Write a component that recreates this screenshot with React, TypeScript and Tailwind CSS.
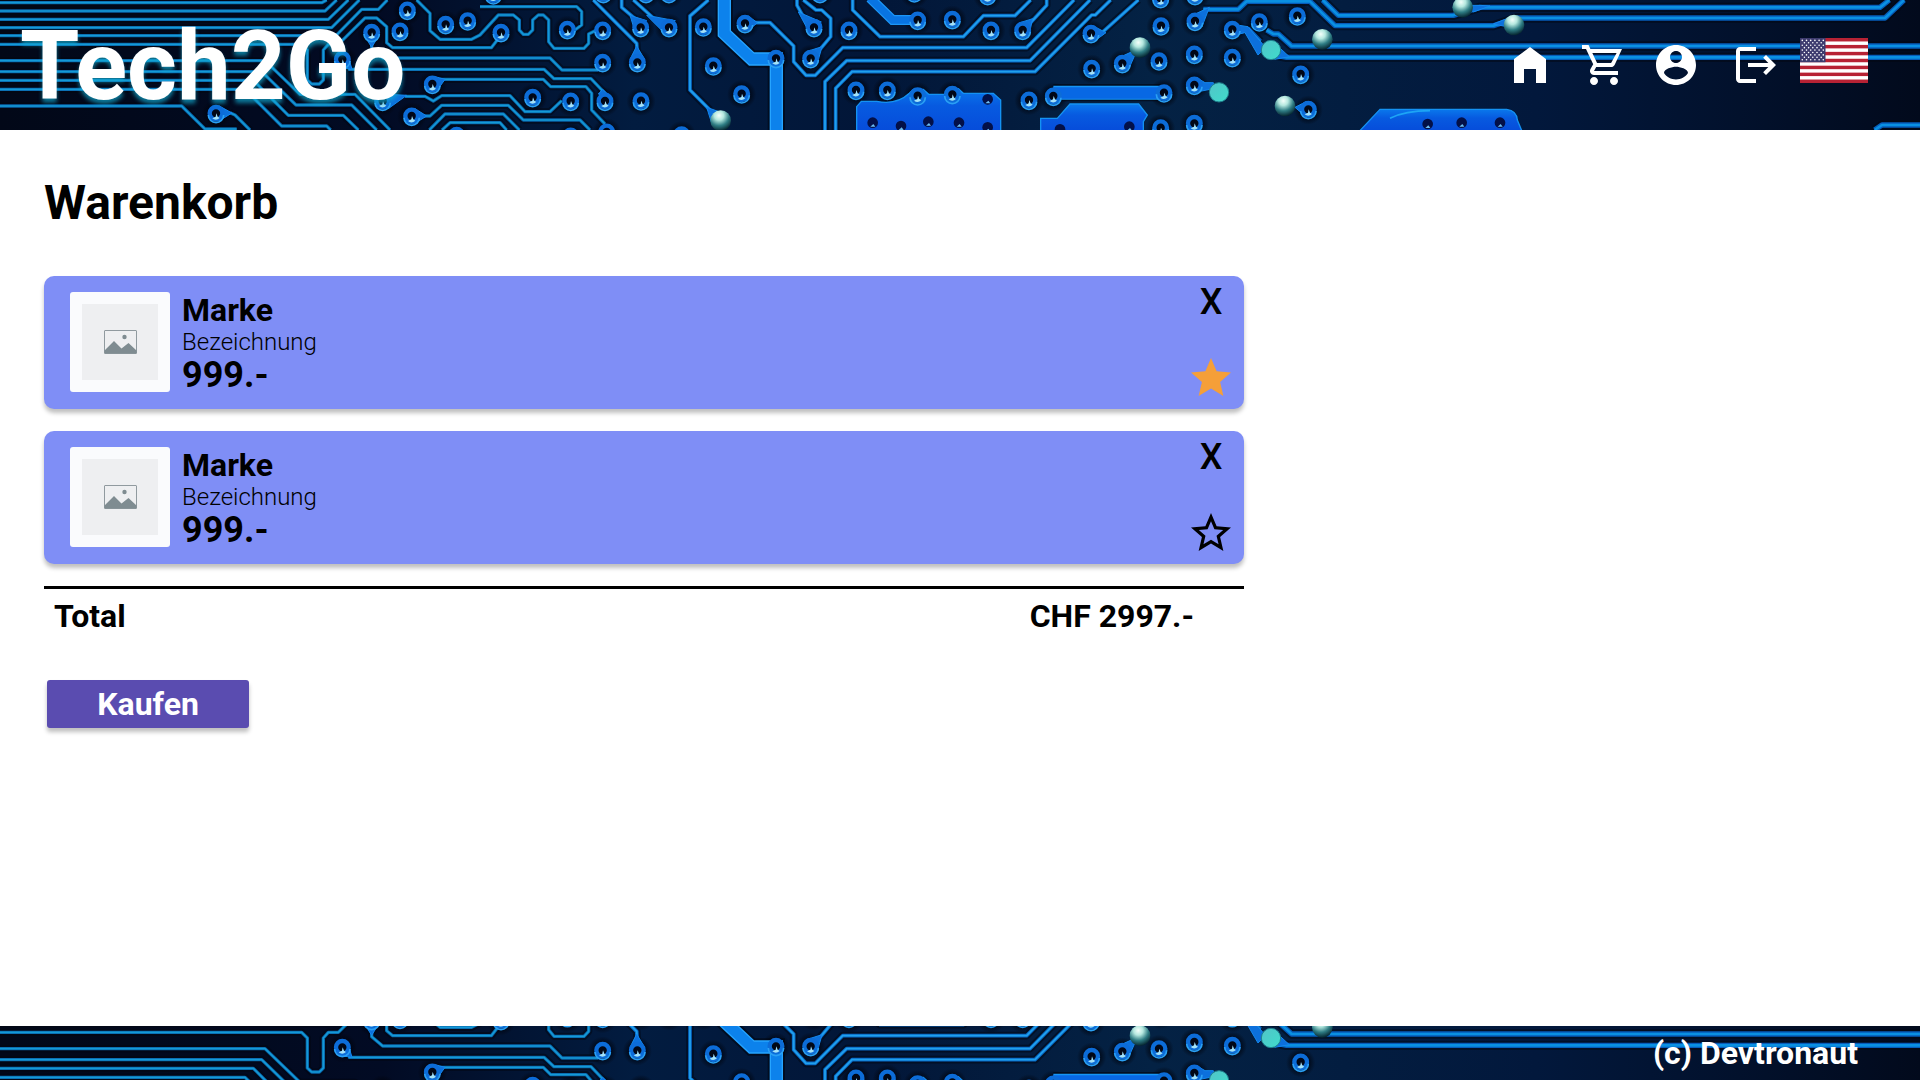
import { useState } from 'react';
import type { ReactNode } from 'react';

type Point = [number, number];

/* Traces of the circuit board, in board units (three per pixel). */
const LEFT_TRACES = [
  'M0 8H965L980 0',
  'M0 33H975L1010 0',
  'M0 58H985L1045 0',
  'M0 83H995L1078 0',
  'M0 107H1008L1085 28H1135L1162 0',
  'M0 133H905L922 150V240L935 252H958L970 240V150L985 133H1015L1095 54H1130L1160 80V128L1178 143H1474L1490 122L1503 97',
  'M1115 110V146L1148 174H1650L1686 210H1795',
  'M0 182H795L900 283H1065L1170 390',
  'M0 215H785L888 315H1055L1130 390',
  'M0 241H760L865 346H1030L1075 390',
  'M0 268H735L845 378H980L992 390',
  'M0 318H545L615 387H710',
  'M690 338L705 345L750 390',
  'M1045 208H1632L1662 236H1773L1815 280',
  'M1250 0L1290 40V92L1320 118H1415L1440 105L1495 45H1540L1558 60V90L1570 103H1585L1598 90V60L1615 45H1630L1646 60V125L1662 145H1752L1766 130V102L1790 90',
  'M1320 238H1630L1652 260H1758L1775 280V330L1815 372',
  'M1215 289H1275L1300 303L1325 287H1530L1575 335H1650L1685 302',
  'M1270 348H1290L1325 316H1525L1570 360H1740L1770 390',
  'M1288 390L1335 342H1510L1558 390',
  'M1326 390L1350 368H1500L1520 390',
  'M1440 20H1730L1745 35V75L1722 92',
];

const RIGHT_TRACES = [
  'M1780 0L1910 130L1912 160',
  'M1865 0V22L1905 56',
  'M1900 0L1960 54',
  'M2125 0L2070 48V270L2130 330',
  'M2262 68H2310L2381 138V185L2418 226H2446L2528 143H3080L3222 0',
  'M2460 148L2492 110V55L2465 30H2448L2410 0',
  'M2410 50L2391 16V0',
  'M2558 0V30L2640 110H2890L2950 47H3045L3092 0',
  'M2475 390V245L2540 182H3090L3270 0',
  'M2507 390V265L2556 215H3105L3275 45H3286L3332 0',
  'M3090 70L3140 16V0',
  'M3306 98L3415 0',
];

const FAR_TRACES = [
  'M3610 28H3715L3740 4H3930L4005 77H4480L4550 54H5655L5712 0',
  'M3968 0L4015 46H4360L4440 22H5640L5668 0',
  'M3730 88H3745L3780 125',
  'M3800 90L3820 102H3835L3875 138H5760',
  'M3830 166L3860 172H5760',
  'M5624 390L5646 375H5760',
];

const VIAS: Point[] = [
  [1222, 30], [1200, 93], [1337, 73], [1403, 62], [1115, 97], [1027, 178], [1297, 252], [1235, 348],
  [1148, 303], [648, 340], [1370, 406], [1503, 97], [1702, 88], [1808, 90], [1808, 187], [1598, 292],
  [1712, 303], [1815, 303], [1923, 302], [1712, 408], [1820, 396], [2045, 404], [1922, 82], [2007, 82],
  [1912, 187], [2110, 80], [2140, 197], [2225, 281], [2235, 70], [2328, 175], [2442, 82], [2432, 175],
  [2547, 90], [2753, 60], [2857, 58], [2568, 270], [2662, 270], [1480, -16], [1810, -20], [1938, -20],
  [2007, -20], [2460, -20], [2743, -22], [2963, -14], [2973, 90], [3068, 90], [3273, 100], [3367, 190],
  [3477, 182], [3483, 77], [3482, -5], [3275, 205], [3087, 300], [3160, 288], [3492, 278], [3482, 383],
  [3583, 370], [3583, 162], [3697, 172], [3583, 255], [3585, 63], [3585, -14], [3697, 88], [3778, 65],
  [3892, 47], [3902, 222], [3925, 328], [2753, 287], [2857, 283],
];

const HOLES: Point[] = [
  [2618, 368], [2703, 378], [2785, 365], [2877, 368], [2963, 298], [2963, 382], [3180, 388],
  [3388, 380], [4283, 372], [4385, 368], [4500, 368],
];

const TAILS = [
  'M1094 108L1115 142L1136 108Z',
  'M1042 160L1056 208L1016 202Z',
  'M1305 230L1335 238L1315 266Z',
  'M1150 282L1220 286L1165 326Z',
  'M1245 326L1280 348L1245 370Z',
  'M658 318L696 339L658 362Z',
  'M1795 282L1808 268L1838 296Z',
  'M1890 178L1910 138L1934 178Z',
  'M1890 46L1940 62L1905 94Z',
  'M1940 46L2026 62L1990 96Z',
  'M2245 48L2272 68L2245 92Z',
  'M2395 36L2464 66L2425 92Z',
  'M2425 153L2466 140L2452 190Z',
  'M3060 68L3098 56L3087 105Z',
  'M3280 78L3318 98L3285 122Z',
  'M3372 166L3412 148L3387 205Z',
  'M3590 233L3615 248H3640V266L3590 276Z',
  'M3590 40L3628 22L3606 80Z',
  'M3705 74L3744 80L3796 142L3774 165L3735 98L3710 104Z',
  'M3824 130L3868 170L3824 178Z',
  'M3885 322L3920 304V352Z',
  'M2120 322L2160 336L2134 366Z',
  'M4400 16H4440L4470 18L4420 36Z',
  'M4480 72L4540 48L4540 84Z',
];

const GOLD_PADS: Point[] = [[2162, 362], [3420, 143], [3967, 118], [3855, 318], [4388, 22], [4542, 75]];
const TEAL_PADS: Point[] = [[3657, 277], [3813, 150]];

function Traces({ paths, edge, core, width }: { paths: string[]; edge: string; core: string; width: number }) {
  const d = paths.join('');
  return (
    <g fill="none" strokeLinejoin="round">
      <path d={d} stroke="#01050f" strokeOpacity="0.5" strokeWidth={width + 12} />
      <path d={d} stroke={edge} strokeWidth={width} />
      <path d={d} stroke={core} strokeWidth={width / 2} />
    </g>
  );
}

function CircuitBoard({ id }: { id: string }) {
  const base = `${id}-base`;
  const gold = `${id}-gold`;
  const plate = `${id}-plate`;
  const halo = `${id}-halo`;
  const teal = `${id}-teal`;
  return (
    <svg
      aria-hidden="true"
      viewBox="0 0 5760 390"
      preserveAspectRatio="xMidYMid slice"
      className="absolute inset-0 size-full"
    >
      <defs>
        <linearGradient id={base}>
          <stop offset="0" stopColor="#020818" />
          <stop offset="0.2" stopColor="#020b24" />
          <stop offset="0.33" stopColor="#021c40" />
          <stop offset="0.45" stopColor="#021638" />
          <stop offset="0.6" stopColor="#042244" />
          <stop offset="0.8" stopColor="#02183c" />
          <stop offset="0.92" stopColor="#02102a" />
          <stop offset="1" stopColor="#020a1c" />
        </linearGradient>
        <radialGradient id={gold} cx="0.42" cy="0.25" r="0.75">
          <stop offset="0" stopColor="#f4fffb" />
          <stop offset="0.3" stopColor="#b5e8df" />
          <stop offset="0.65" stopColor="#2f7d84" />
          <stop offset="1" stopColor="#05242f" />
        </radialGradient>
        <linearGradient id={teal} x1="0" y1="0" x2="1" y2="1">
          <stop offset="0" stopColor="#52c4c8" />
          <stop offset="1" stopColor="#3fdccb" />
        </linearGradient>
        <linearGradient id={plate} x1="0" y1="0" x2="0" y2="1">
          <stop offset="0" stopColor="#0a78ec" />
          <stop offset="0.4" stopColor="#075ae0" />
          <stop offset="1" stopColor="#064cda" />
        </linearGradient>
        <radialGradient id={halo}>
          <stop offset="0.5" stopColor="#00030c" stopOpacity="0.8" />
          <stop offset="1" stopColor="#00030c" stopOpacity="0" />
        </radialGradient>
      </defs>
      <rect width="5760" height="390" fill={`url(#${base})`} />
      {VIAS.map(([x, y]) => (
        <circle key={`${x}-${y}`} cx={x} cy={y + 2} r="44" fill={`url(#${halo})`} />
      ))}
      <Traces paths={LEFT_TRACES} edge="#0862a8" core="#149ad6" width={10} />
      <Traces paths={RIGHT_TRACES} edge="#0868c6" core="#20a0ec" width={11} />
      <Traces paths={FAR_TRACES} edge="#065cba" core="#0a90e2" width={16} />

      <g fill="none" stroke="#01050f" strokeOpacity="0.6">
        <path d="M2173 0V100L2255 177H2329V390" strokeWidth="52" />
        <path d="M3160 278H3492" strokeWidth="52" />
      </g>
      <g fill="none">
        <path d="M2173 0V100L2255 177H2329V390" stroke="#26a4ff" strokeWidth="40" />
        <path d="M2173 0V100L2255 177H2329V390" stroke="#0c82ec" strokeWidth="32" />
        <path d="M2610 -6L2678 60H2753" stroke="#1c96f6" strokeWidth="30" />
        <path d="M2610 -6L2678 60H2753" stroke="#0874e2" strokeWidth="22" />
        <path d="M3160 278H3492" stroke="#1695f4" strokeWidth="42" />
        <path d="M3160 279H3492" stroke="#0868e4" strokeWidth="34" />
      </g>
      <g fill={`url(#${plate})`} stroke="#1492f2" strokeWidth="4">
        <path d="M2570 394V320L2584 304H2630Q2690 316 2728 280L2740 268H2770L2786 283H2835L2850 266H2875L2890 280H2980L3002 300V394Z" />
        <path d="M3122 394V355H3172L3210 312H3416L3442 345L3430 365V394Z" />
        <path d="M4078 394L4140 328H4520Q4550 332 4552 360L4566 394Z" />
      </g>
      <path d="M4170 355Q4215 332 4290 332" fill="none" stroke="#1da5f5" strokeWidth="5" />

      <path d={TAILS.join('')} fill="#0c70dc" stroke="#1488ee" strokeWidth="3" strokeLinejoin="round" />
      {VIAS.map(([x, y]) => (
        <g key={`${x}-${y}`}>
          <circle cx={x} cy={y} r="19" fill="#010716" stroke="#0c6cd8" strokeWidth="13" />
          <path d={`M${x - 23} ${y + 5}A23 23 0 0 0 ${x + 23} ${y + 5}`} fill="none" stroke="#2aa0f4" strokeWidth="5" />
          <path d={`M${x - 11} ${y + 15}L${x - 1} ${y + 10}L${x + 1} ${y}L${x + 5} ${y + 10}L${x + 11} ${y + 14}Q${x} ${y + 24} ${x - 11} ${y + 15}Z`} fill="#a4e2f8" />
        </g>
      ))}
      {HOLES.map(([x, y]) => (
        <g key={`${x}-${y}`}>
          <circle cx={x} cy={y} r="16" fill="#031048" />
          <path d={`M${x - 7} ${y + 12}L${x + 2} ${y + 4}L${x + 8} ${y + 12}Z`} fill="#6dbdf0" />
        </g>
      ))}
      {GOLD_PADS.map(([x, y]) => (
        <circle key={x} cx={x} cy={y} r="31" fill={`url(#${gold})`} />
      ))}
      {TEAL_PADS.map(([x, y]) => (
        <circle key={x} cx={x} cy={y} r="29" fill={`url(#${teal})`} stroke="#1f7f8c" strokeWidth="3" />
      ))}
    </svg>
  );
}

function Icon({ d }: { d: string }) {
  return (
    <svg aria-hidden="true" viewBox="0 0 24 24" className="size-12" fill="currentColor">
      <path d={d} />
    </svg>
  );
}

const ICONS = {
  home: 'M4 21V9l8-6 8 6v12h-5v-7H9v7z',
  cart: 'M15.55 13c.75 0 1.41-.41 1.75-1.03L21 4H5.21l-.94-2H1v2h2l3.6 7.59-1.35 2.44C4.52 15.37 5.48 17 7 17h12v-2H7l1.1-2h7.45zM6.16 6h12.15l-2.76 5H8.53L6.16 6zM7 18c-1.1 0-1.99.9-1.99 2S5.9 22 7 22s2-.9 2-2-.9-2-2-2zm10 0c-1.1 0-1.99.9-1.99 2s.89 2 1.99 2 2-.9 2-2-.9-2-2-2z',
  account:
    'M12 2C6.48 2 2 6.48 2 12s4.48 10 10 10 10-4.48 10-10S17.52 2 12 2zm0 3c1.66 0 3 1.34 3 3s-1.34 3-3 3-3-1.34-3-3 1.34-3 3-3zm0 14.2c-2.5 0-4.71-1.28-6-3.22.03-1.99 4-3.08 6-3.08 1.99 0 5.97 1.09 6 3.08-1.29 1.94-3.5 3.22-6 3.22z',
  logout: 'M17 7l-1.41 1.41L18.17 11H8v2h10.17l-2.58 2.58L17 17l5-5zM4 5h8V3H4c-1.1 0-2 .9-2 2v14c0 1.1.9 2 2 2h8v-2H4V5z',
  star: 'M12 17.27L18.18 21l-1.63-7.03L22 9.24l-7.19-.61L12 2 9.19 8.63 2 9.24l5.46 4.73L5.82 21z',
  starOutline:
    'M22 9.24l-7.19-.62L12 2 9.19 8.63 2 9.24l5.46 4.73L5.82 21 12 17.27 18.18 21l-1.63-7.03L22 9.24zM12 15.4l-3.76 2.27 1-4.28-3.32-2.88 4.38-.38L12 6.1l1.71 4.04 4.38.38-3.32 2.88 1 4.28L12 15.4z',
};

function UsFlag() {
  const stripe = 45 / 13;
  return (
    <svg aria-hidden="true" viewBox="0 0 68 45" className="h-[45px] w-[68px]">
      <rect width="68" height="45" fill="#fff" />
      {[0, 2, 4, 6, 8, 10, 12].map((n) => (
        <rect key={n} y={n * stripe} width="68" height={stripe} fill="#b72234" />
      ))}
      <rect width="25.5" height={stripe * 7} fill="#3d3b6e" />
      {Array.from({ length: 9 }, (_, row) =>
        Array.from({ length: row % 2 ? 5 : 6 }, (_, col) => (
          <circle
            key={`${row}-${col}`}
            cx={2.3 + col * 4.2 + (row % 2 ? 2.1 : 0)}
            cy={2.4 + row * 2.42}
            r="0.8"
            fill="#fff"
          />
        )),
      )}
    </svg>
  );
}

function NavLink({ label, className, children }: { label: string; className: string; children: ReactNode }) {
  return (
    <a href="#" aria-label={label} className={className}>
      {children}
    </a>
  );
}

function Placeholder() {
  return (
    <div className="flex size-[100px] items-center justify-center rounded-[3px] bg-[#fafbfd]">
      <div className="flex size-[76px] items-center justify-center bg-[#eeeff1]">
        <svg aria-hidden="true" viewBox="0 0 33 24" className="h-6 w-[33px]">
          <rect x="0.5" y="0.5" width="32" height="23" rx="0.5" fill="none" stroke="#909a9f" />
          <circle cx="20.5" cy="7" r="2.2" fill="#7f8c91" />
          <path d="M0.5 20.5L10 11L17.5 18.5L24.5 13L32.5 20.5V23.5H0.5Z" fill="#7f8c91" />
        </svg>
      </div>
    </div>
  );
}

function CartItem({ favourite }: { favourite: boolean }) {
  const [starred, setStarred] = useState(favourite);
  return (
    <li className="flex rounded-[10px] bg-[#7f8ef6] pr-[9px] pl-[26px] shadow-[0_4px_4px_rgba(0,0,0,0.25)]">
      <div className="flex flex-1 gap-3 pt-4 pb-[15px]">
        <Placeholder />
        <div>
          <h2 className="text-[32px] leading-9 font-bold">Marke</h2>
          <p className="text-2xl leading-7 font-light">Bezeichnung</p>
          <p className="text-4xl leading-[38px] font-bold">999.-</p>
        </div>
      </div>
      <div className="flex flex-col items-center justify-between pt-[5px] pb-[7px]">
        <button type="button" aria-label="Entfernen" className="text-4xl leading-[42px] font-medium">
          X
        </button>
        <button
          type="button"
          aria-label="Favorit"
          aria-pressed={starred}
          onClick={() => setStarred(!starred)}
          className={starred ? 'text-[#f59f38]' : 'text-black'}
        >
          <Icon d={starred ? ICONS.star : ICONS.starOutline} />
        </button>
      </div>
    </li>
  );
}

export default function App() {
  return (
    <div className="flex min-h-screen flex-col bg-white font-[Roboto,sans-serif] text-black">
      <header className="relative h-[130px] overflow-hidden">
        <CircuitBoard id="top" />
        <div className="relative flex h-full items-center justify-between pr-[52px] pl-5 text-white">
          <a href="#" className="pt-0.5 text-8xl leading-[112px] font-bold [text-shadow:0_4px_4px_#12a9cfb0]">
            Tech2Go
          </a>
          <nav aria-label="Hauptnavigation" className="flex items-center">
            <NavLink label="Startseite" className="mr-[26px]">
              <Icon d={ICONS.home} />
            </NavLink>
            <NavLink label="Warenkorb" className="mr-6">
              <Icon d={ICONS.cart} />
            </NavLink>
            <NavLink label="Konto" className="mr-8">
              <Icon d={ICONS.account} />
            </NavLink>
            <NavLink label="Abmelden" className="mr-5">
              <Icon d={ICONS.logout} />
            </NavLink>
            <button type="button" aria-label="English" className="pb-[9px]">
              <UsFlag />
            </button>
          </nav>
        </div>
      </header>

      <main className="flex-1 px-11 pt-[45px]">
        <h1 className="text-5xl leading-14 font-bold">Warenkorb</h1>
        <div className="mt-[45px] max-w-[1200px]">
          <ul className="flex flex-col gap-[22px]">
            <CartItem favourite />
            <CartItem favourite={false} />
          </ul>
          <div className="mt-[22px] flex justify-between border-t-3 border-black pt-2 pr-[50px] pl-2.5 text-[32px] leading-[38px] font-bold">
            <span>Total</span>
            <span>CHF 2997.-</span>
          </div>
        </div>
        <button
          type="button"
          className="mt-[45px] ml-[3px] h-12 w-[202px] rounded-[3px] bg-[#5a4cb0] text-[32px] leading-[38px] font-bold text-white shadow-[0_4px_4px_rgba(0,0,0,0.25)]"
        >
          Kaufen
        </button>
      </main>

      <footer className="relative h-[54px] overflow-hidden">
        <CircuitBoard id="bottom" />
        <p className="relative pt-2 pr-[62px] text-right text-[32px] leading-[38px] font-bold text-white">(c) Devtronaut</p>
      </footer>
    </div>
  );
}
